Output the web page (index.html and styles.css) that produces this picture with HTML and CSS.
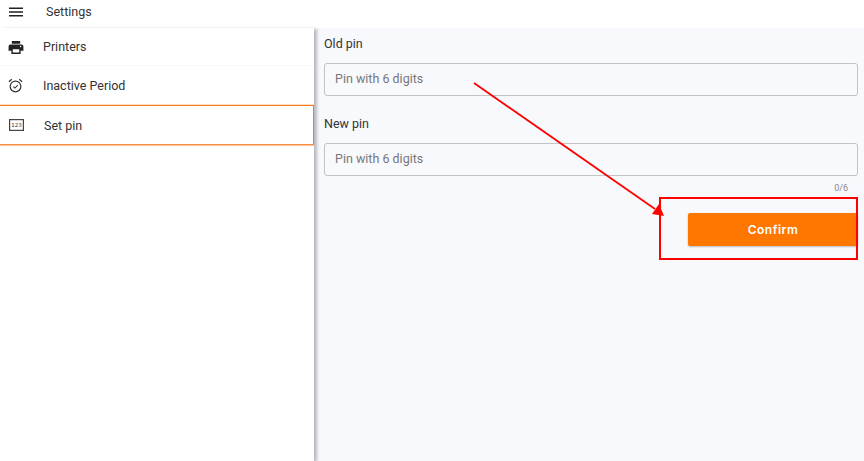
FILE: index.html
```html
<!DOCTYPE html>
<html lang="en">
<head>
    <meta charset="UTF-8">
    <title>Settings</title>
    <link rel="stylesheet" href="styles.css">
</head>
<body>
    <div class="app">
        <div class="header">
            <svg class="menu-icon" width="14" height="10" viewBox="0 0 14 10"><path d="M0 0.5h14v1.4H0zM0 4.3h14v1.4H0zM0 8.1h14v1.4H0z" fill="#222"/></svg>
            <span class="header-title">Settings</span>
        </div>
        <div class="content">
            <div class="sidebar">
                <div class="nav-item nav-printers">
                    <svg class="nav-icon" width="16" height="13" viewBox="0 0 16 14"><path d="M3.5 0h9v3h-9zM2 3.8h12a2 2 0 0 1 2 2V10.500h-3V14H3v-3.500H0V5.800a2 2 0 0 1 2-2zM4.500 9v3.500h7V9zM13 5.200a.8.8 0 1 0 0 1.600.8.8 0 0 0 0-1.600z" fill="#222" fill-rule="evenodd"/></svg>
                    <span>Printers</span>
                </div>
                <div class="nav-item nav-inactive">
                    <svg class="nav-icon" width="15" height="15" viewBox="0 0 16 16" fill="none" stroke="#333"><circle cx="8" cy="9" r="5.700" stroke-width="1.300"/><path d="M1 4 4 1.300M15 4 12 1.300" stroke-width="1.300"/><path d="M5.800 9.200 7.400 10.800 10.500 7.500" stroke-width="1.100"/></svg>
                    <span>Inactive Period</span>
                </div>
                <div class="nav-item nav-active">
                    <svg class="nav-icon" width="15" height="12" viewBox="0 0 15 12"><rect x=".6" y=".6" width="13.800" height="10.800" fill="none" stroke="#444" stroke-width="1.200"/><text x="7.500" y="8" class="pin-glyph">123</text></svg>
                    <span>Set pin</span>
                </div>
            </div>
            <div class="main">
                <label class="field-label">Old pin</label>
                <div class="pin-input">Pin with 6 digits</div>
                <label class="field-label field-label-new">New pin</label>
                <div class="pin-input">Pin with 6 digits</div>
                <div class="counter">0/6</div>
                <div class="actions">
                    <button class="confirm-btn">Confirm</button>
                </div>
            </div>
        </div>
        <svg class="annotation" width="864" height="461" viewBox="0 0 864 461">
            <rect x="660" y="198" width="197" height="61" fill="none" stroke="#f00" stroke-width="2"/>
            <path d="M474 83 655 209" fill="none" stroke="#f00" stroke-width="1.800"/>
            <path d="M664 216 652 214 659 204z" fill="#f00"/>
        </svg>
    </div>
</body>
</html>
```

FILE: styles.css
```css
* {
    margin: 0;
    padding: 0;
    box-sizing: border-box;
}

body {
    font-family: Roboto, 'Liberation Sans', sans-serif;
    color: #333;
    background-color: white;
    overflow: hidden;
}

.app {
    position: relative;
    width: 864px;
    height: 461px;
    display: flex;
    flex-direction: column;
}

.header {
    height: 28px;
    display: flex;
    align-items: center;
    padding-left: 9px;
    padding-bottom: 5px;
    flex-shrink: 0;
}

.header-title {
    margin-left: 23px;
    font-size: 12.5px;
    color: #333;
}

.content {
    flex: 1;
    display: flex;
    min-height: 0;
}

.sidebar {
    width: 314px;
    flex-shrink: 0;
    background-color: white;
    box-shadow: 3px 1px 3px rgba(0,0,0,0.25);
    position: relative;
}

.nav-item {
    display: flex;
    align-items: center;
    font-size: 12.5px;
    color: #333;
    position: relative;
}

.nav-item .nav-icon {
    position: absolute;
}

.nav-item span {
    margin-left: 43px;
}

.nav-printers {
    height: 38px;
    border-bottom: 1px solid #f9f9f9;
}

.nav-printers .nav-icon {
    left: 8px;
    top: 13px;
}

.nav-inactive {
    height: 39px;
}

.nav-inactive .nav-icon {
    left: 8px;
    top: 12px;
}

.nav-active {
    height: 40px;
    border-top: 1px solid #f57c1f;
    border-right: 1px solid #f57c1f;
    border-bottom: 1px solid #f98f45;
    box-shadow: 0 1px 0 #fcc498, 0 -1px 0 #fddcc2;
}

.nav-active span {
    margin-left: 44px;
}

.nav-active .nav-icon {
    left: 9px;
    top: 13px;
}

.pin-glyph {
    font-family: 'DejaVu Sans', sans-serif;
    font-size: 5.5px;
    fill: #333;
    text-anchor: middle;
}

.main {
    flex: 1;
    background-color: #f8f9fd;
    padding: 8px 6px 0 10px;
}

.field-label {
    display: block;
    font-size: 12.5px;
    line-height: 16px;
    color: #333;
    margin-bottom: 11px;
}

.field-label-new {
    margin-top: 20px;
    margin-bottom: 11px;
}

.pin-input {
    height: 33px;
    border: 1px solid #c2c4c8;
    border-radius: 3px;
    padding-left: 10px;
    padding-bottom: 2px;
    display: flex;
    align-items: center;
    font-size: 12.5px;
    color: #777;
}

.counter {
    font-size: 9px;
    line-height: 11px;
    color: #888;
    text-align: right;
    padding-right: 10px;
    margin-top: 7px;
}

.actions {
    display: flex;
    justify-content: flex-end;
    margin-top: 19px;
}

.confirm-btn {
    width: 170px;
    height: 33px;
    border: none;
    border-radius: 2px;
    background-color: #ff7700;
    color: white;
    font-family: Inter, Roboto, sans-serif;
    font-size: 12px;
    font-weight: 600;
    letter-spacing: 0.5px;
    box-shadow: 0 1px 2px rgba(0,0,0,0.25);
}

.annotation {
    position: absolute;
    left: 0;
    top: 0;
    pointer-events: none;
}
```
